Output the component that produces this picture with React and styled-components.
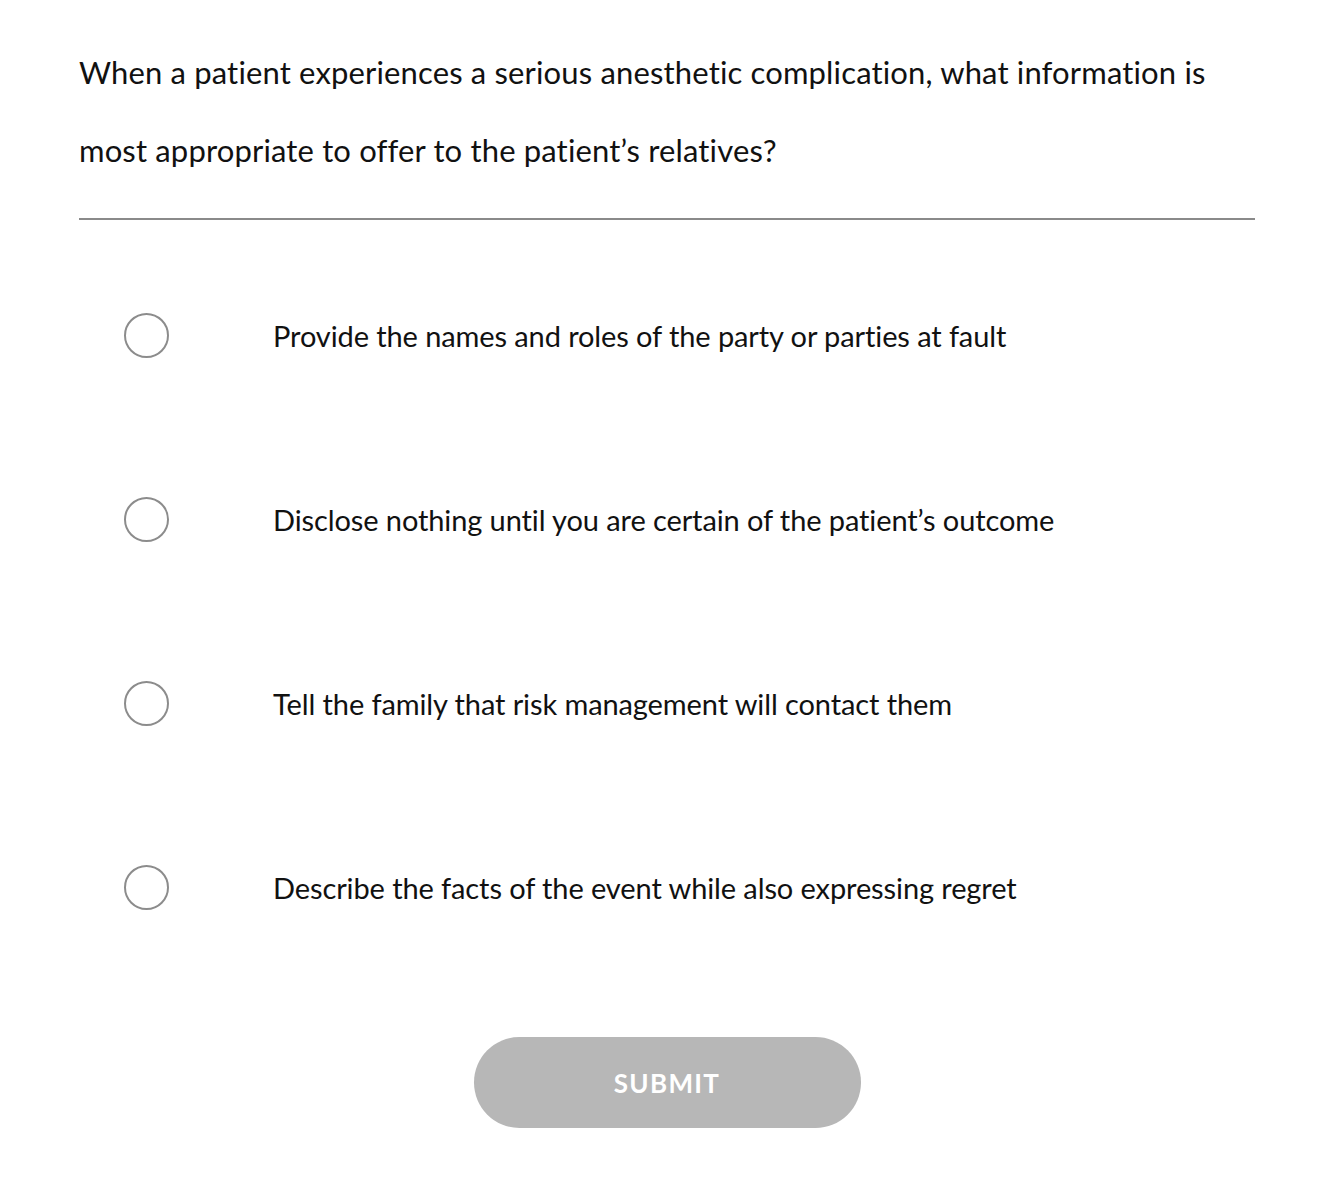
import React, { useState } from 'react';
import styled, { createGlobalStyle } from 'styled-components';

const GlobalStyle = createGlobalStyle`
  body {
    margin: 0;
    background: #fff;
    font-family: Lato, "Noto Sans", sans-serif;
    color: #111;
  }
`;

const Page = styled.div`
  padding: 33px 79px 0 79px;
`;

const Question = styled.p`
  margin: 0;
  font-size: 31px;
  line-height: 78px;
  letter-spacing: 0.15px;
`;

const Divider = styled.hr`
  border: none;
  border-top: 2px solid #8a8a8a;
  margin: 29px 0 0 0;
`;

const Options = styled.div`
  display: flex;
  flex-direction: column;
  padding-top: 23px;
`;

const Option = styled.label`
  display: flex;
  align-items: center;
  height: 184px;
  cursor: pointer;
`;

const Radio = styled.span`
  width: 41px;
  height: 41px;
  border: 2px solid ${p => (p.checked ? '#444' : '#8c8c8c')};
  border-radius: 50%;
  margin-left: 45px;
  flex-shrink: 0;
  display: flex;
  align-items: center;
  justify-content: center;
  &::after {
    content: '';
    width: 23px;
    height: 23px;
    border-radius: 50%;
    background: ${p => (p.checked ? '#444' : 'transparent')};
  }
`;

const OptionText = styled.span`
  margin-left: 104px;
  font-size: 29px;
  letter-spacing: -0.1px;
`;

const Footer = styled.div`
  display: flex;
  justify-content: center;
  padding: 58px 0 55px;
  margin-left: -79px;
  margin-right: -79px;
`;

const SubmitButton = styled.button`
  width: 387px;
  height: 91px;
  border: none;
  border-radius: 46px;
  background: #b7b7b7;
  color: #fff;
  font-family: Lato, "Noto Sans", sans-serif;
  font-weight: 700;
  font-size: 26px;
  letter-spacing: 1.3px;
  cursor: default;
`;

const answers = [
  'Provide the names and roles of the party or parties at fault',
  'Disclose nothing until you are certain of the patient\u2019s outcome',
  'Tell the family that risk management will contact them',
  'Describe the facts of the event while also expressing regret',
];

export default function App() {
  const [selected, setSelected] = useState(null);
  return (
    <>
      <GlobalStyle />
      <Page>
        <Question>
          When a patient experiences a serious anesthetic complication, what information is most appropriate to offer to the patient’s relatives?
        </Question>
        <Divider />
        <Options>
          {answers.map((a, i) => (
            <Option key={i} onClick={() => setSelected(i)}>
              <Radio checked={selected === i} />
              <OptionText>{a}</OptionText>
            </Option>
          ))}
        </Options>
        <Footer>
          <SubmitButton disabled={selected === null}>SUBMIT</SubmitButton>
        </Footer>
      </Page>
    </>
  );
}
